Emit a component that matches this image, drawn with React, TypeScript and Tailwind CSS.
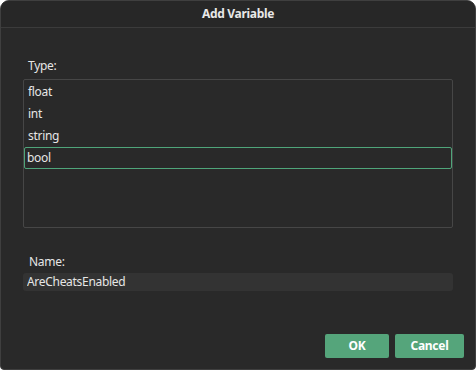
import { useState } from "react"

const types = ["float", "int", "string", "bool"]

export default function App() {
  const [selected, setSelected] = useState("bool")
  const [name, setName] = useState("AreCheatsEnabled")

  return (
    <div
      className="w-[476px] h-[370px] bg-[#292929] text-[#e6e6e6] border border-[#3f3f3f] rounded-t-[9px] rounded-b-[4px] overflow-hidden flex flex-col tracking-[-0.3px]"
      style={{ fontFamily: "'Noto Sans', 'Open Sans', sans-serif" }}
    >
      <div className="h-[27px] shrink-0 bg-[#272727] border-b border-[#3b3b3b] flex items-center justify-center">
        <span className="text-[12px] font-bold text-[#e8e8e8]">Add Variable</span>
      </div>

      <div className="flex-1 flex flex-col px-[22px]">
        <div className="pt-[30px] pl-[5px] h-[51px] text-[12px] leading-[16px]">Type:</div>
        <div className="h-[149px] border border-[#464646] rounded-[2px] flex flex-col pt-px">
          {types.map((t) => (
            <button
              key={t}
              onClick={() => setSelected(t)}
              className={
                selected === t
                  ? "h-[22px] text-left pl-[2px] text-[12px] border border-[#4fa57a] rounded-[2px]"
                  : "h-[22px] text-left pl-[3px] text-[12px] border border-transparent"
              }
            >
              {t}
            </button>
          ))}
        </div>

        <div className="pt-[26px] pl-[6px] h-[45px] text-[12px] leading-[16px]">Name:</div>
        <input
          value={name}
          onChange={(e) => setName(e.target.value)}
          className="h-[18px] bg-[#333333] rounded-[3px] px-[4px] text-[12px] text-[#e6e6e6] outline-none tracking-[-0.3px]"
        />

        <div className="flex justify-end gap-[6px] mt-[43px] mr-[-11px]">
          <button className="w-[64px] h-[24px] bg-[#55a57b] rounded-[2px] text-[12px] font-bold text-white">
            OK
          </button>
          <button className="w-[69px] h-[24px] bg-[#55a57b] rounded-[2px] text-[12px] font-bold text-white">
            Cancel
          </button>
        </div>
      </div>
    </div>
  )
}
